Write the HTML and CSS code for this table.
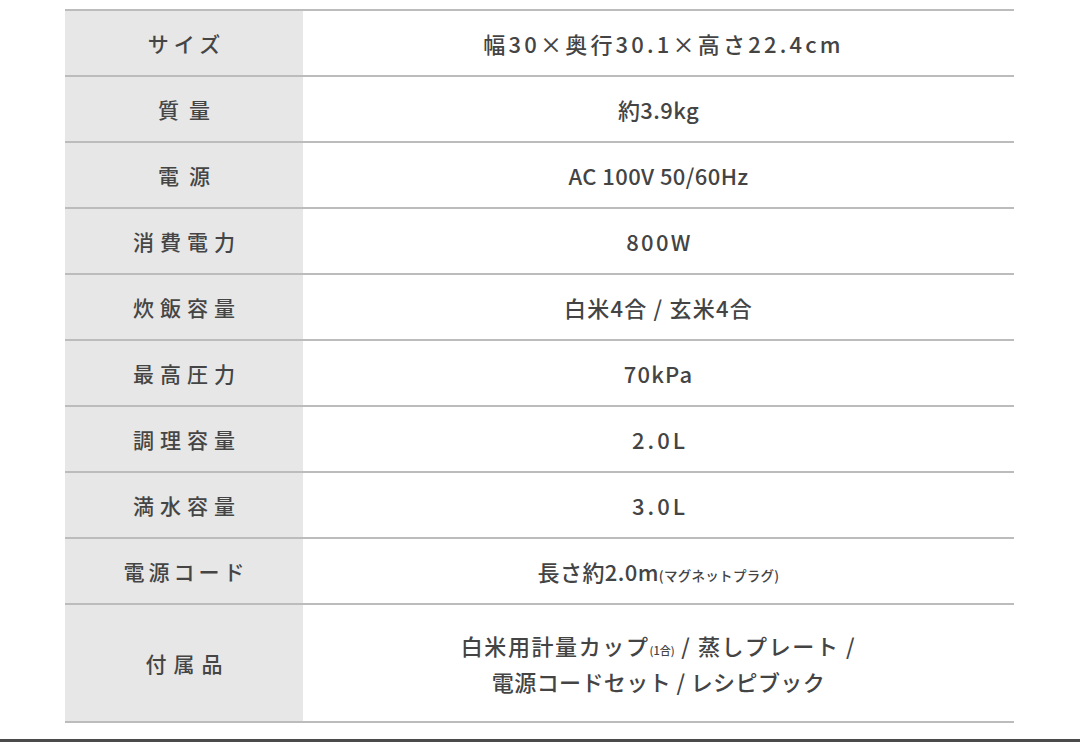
FILE: index.html
```html
<!DOCTYPE html>
<html lang="ja">
<head>
<meta charset="utf-8">
<link rel="stylesheet" href="styles.css">
</head>
<body>
<div class="page">
  <div class="spec">
    <div class="row"><div class="label ls-k">サイズ</div><div class="value sp-size">幅30×奥行30.1×高さ22.4cm</div></div>
    <div class="row"><div class="label ls-2">質量</div><div class="value sp-tight">約3.9kg</div></div>
    <div class="row"><div class="label ls-2">電源</div><div class="value sp-ac">AC 100V 50/60Hz</div></div>
    <div class="row"><div class="label">消費電力</div><div class="value sp-w">800W</div></div>
    <div class="row"><div class="label">炊飯容量</div><div class="value sp-mid">白米4合 / 玄米4合</div></div>
    <div class="row"><div class="label">最高圧力</div><div class="value sp-mid">70kPa</div></div>
    <div class="row"><div class="label">調理容量</div><div class="value sp-l">2.0L</div></div>
    <div class="row"><div class="label">満水容量</div><div class="value sp-l">3.0L</div></div>
    <div class="row"><div class="label ls-5">電源コード</div><div class="value sp-tight"><span>長さ約2.0m<span class="small">(マグネットプラグ)</span></span></div></div>
    <div class="row tall"><div class="label ls-3">付属品</div><div class="value sp-tight"><p class="multi"><span class="line1">白米用計量カップ<span class="small xs">(1合)</span> / 蒸しプレート /</span><br>電源コードセット / レシピブック</p></div></div>
  </div>
</div>
<div class="bottom-bar"></div>
</body>
</html>
```

FILE: styles.css
```css
html, body {
  margin: 0;
  padding: 0;
  background: #ffffff;
}
body {
  width: 1080px;
  height: 742px;
  overflow: hidden;
  position: relative;
  font-family: "Noto Sans CJK JP", "Noto Sans", sans-serif;
  color: #424242;
}
.page {
  padding: 9px 66px 0 65px;
}
.spec {
  border-top: 2px solid #bcbcbc;
}
.row {
  display: grid;
  grid-template-columns: 238px 1fr;
  height: 66px;
  border-bottom: 2px solid #bcbcbc;
  box-sizing: border-box;
}
.row.tall {
  height: 118px;
}
.label {
  background: #e7e7e7;
  display: flex;
  align-items: center;
  justify-content: center;
  font-size: 21px;
  font-weight: 500;
  letter-spacing: 6px;
  padding-left: 6px;
  color: #454545;
}
.label.ls-2 { letter-spacing: 10px; padding-left: 10px; }
.label.ls-3 { letter-spacing: 7px; padding-left: 7px; }
.label.ls-5 { letter-spacing: 4px; padding-left: 4px; }
.label.ls-k { letter-spacing: 5px; padding-left: 5px; }
.value {
  display: flex;
  align-items: center;
  justify-content: center;
  text-align: center;
  font-size: 22px;
  font-weight: 500;
  color: #444;
}
.sp-size { letter-spacing: 3.2px; padding-left: 10px; }
.sp-tight { letter-spacing: 0.4px; }
.sp-ac { letter-spacing: 0.4px; }
.sp-w { letter-spacing: 2.3px; padding-left: 2px; }
.sp-mid { letter-spacing: 1.2px; }
.sp-l { letter-spacing: 3px; padding-left: 3px; }
.multi {
  margin: 0;
  line-height: 36px;
  padding-top: 0;
}
.line1 {
  letter-spacing: 1.6px;
}
.small {
  font-size: 13.5px;
  letter-spacing: 0.3px;
  line-height: 1;
}
.small.xs {
  font-size: 11px;
  letter-spacing: 0;
}
.bottom-bar {
  position: absolute;
  left: 0;
  right: 0;
  bottom: 0;
  height: 3px;
  background: #4a4a4a;
}
```
